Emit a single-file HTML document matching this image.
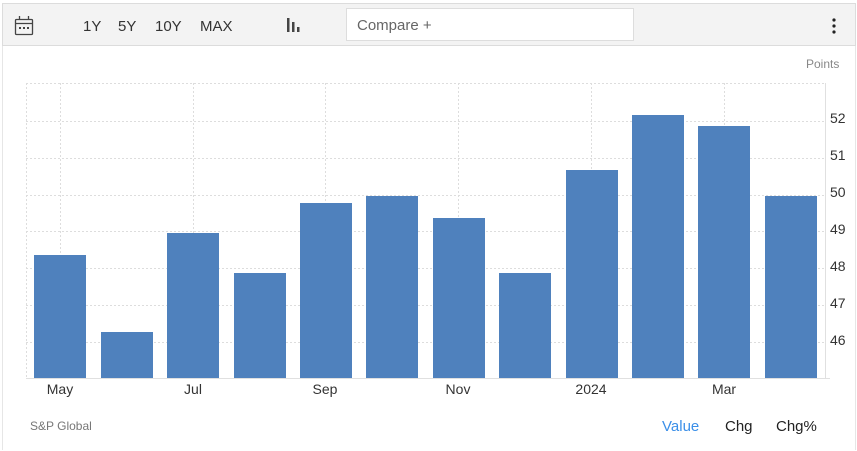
<!DOCTYPE html>
<html><head><meta charset="utf-8"><style>
html,body{margin:0;padding:0;background:#fff;width:857px;height:451px;overflow:hidden;font-family:"Liberation Sans",sans-serif}
.frame{position:absolute;left:2px;top:3px;width:852px;height:447px;border-left:1px solid #e6e6e6;border-right:1px solid #e6e6e6}
.bar{position:absolute;left:2px;top:3px;width:852px;height:41px;background:#f3f3f3;border:1px solid #dcdcdc}
.t{position:absolute;font-size:15px;color:#333}
.cmp{position:absolute;left:346px;top:8px;width:288px;height:33px;background:#fff;border:1px solid #ddd;box-sizing:border-box;font-size:15px;color:#666;padding:9px 10px;line-height:15px}
</style></head><body>
<div class="frame"></div>
<div class="bar"></div>
<svg style="position:absolute;left:0;top:0" width="857" height="451">
<g fill="none" stroke="#444" stroke-width="1.3">
<rect x="15.5" y="19.5" width="17" height="15" rx="1"/>
<line x1="15.5" y1="23.5" x2="32.5" y2="23.5"/>
<line x1="19.5" y1="16" x2="19.5" y2="20"/><line x1="28.5" y1="16" x2="28.5" y2="20"/>
</g>
<g fill="#444"><rect x="19" y="27" width="2" height="2"/><rect x="23" y="27" width="2" height="2"/><rect x="27" y="27" width="2" height="2"/></g>
<g fill="#444"><rect x="287" y="18" width="2.5" height="14"/><rect x="292" y="22" width="2.5" height="10"/><rect x="297" y="27" width="2.5" height="5"/></g>
<g fill="#222"><circle cx="834" cy="20" r="1.6"/><circle cx="834" cy="26" r="1.6"/><circle cx="834" cy="32" r="1.6"/></g>
<g stroke="#ddd" stroke-dasharray="2,2" stroke-width="1">
<line x1="26" y1="83.5" x2="825" y2="83.5"/>
<line x1="26" y1="121.5" x2="825" y2="121.5"/><line x1="26" y1="158.5" x2="825" y2="158.5"/>
<line x1="26" y1="195.5" x2="825" y2="195.5"/><line x1="26" y1="231.5" x2="825" y2="231.5"/>
<line x1="26" y1="268.5" x2="825" y2="268.5"/><line x1="26" y1="305.5" x2="825" y2="305.5"/>
<line x1="26" y1="342.5" x2="825" y2="342.5"/>
<line x1="26.5" y1="83" x2="26.5" y2="378"/>
<line x1="60.5" y1="83" x2="60.5" y2="378"/><line x1="193.5" y1="83" x2="193.5" y2="378"/>
<line x1="325.5" y1="83" x2="325.5" y2="378"/><line x1="458.5" y1="83" x2="458.5" y2="378"/>
<line x1="591.5" y1="83" x2="591.5" y2="378"/><line x1="724.5" y1="83" x2="724.5" y2="378"/>
</g>
<line x1="825.5" y1="83" x2="825.5" y2="379" stroke="#e0e0e0"/>
<line x1="26" y1="378.5" x2="830" y2="378.5" stroke="#e0e0e0"/>
<g fill="#4f81bd">
<rect x="34" y="255" width="52" height="123"/>
<rect x="101" y="332" width="52" height="46"/>
<rect x="167" y="233" width="52" height="145"/>
<rect x="234" y="273" width="52" height="105"/>
<rect x="300" y="203" width="52" height="175"/>
<rect x="366" y="196" width="52" height="182"/>
<rect x="433" y="218" width="52" height="160"/>
<rect x="499" y="273" width="52" height="105"/>
<rect x="566" y="170" width="52" height="208"/>
<rect x="632" y="115" width="52" height="263"/>
<rect x="698" y="126" width="52" height="252"/>
<rect x="765" y="196" width="52" height="182"/>
</g>
<g font-family="Liberation Sans" font-size="14" fill="#333">
<text x="830" y="123">52</text><text x="830" y="160">51</text><text x="830" y="197">50</text>
<text x="830" y="234">49</text><text x="830" y="271">48</text><text x="830" y="308">47</text><text x="830" y="345">46</text>
</g>
<text x="806" y="68" font-family="Liberation Sans" font-size="12" fill="#888">Points</text>
<g font-family="Liberation Sans" font-size="14" fill="#333" text-anchor="middle">
<text x="60" y="394">May</text><text x="193" y="394">Jul</text><text x="325" y="394">Sep</text>
<text x="458" y="394">Nov</text><text x="591" y="394">2024</text><text x="724" y="394">Mar</text>
</g>
<text x="30" y="430" font-family="Liberation Sans" font-size="12" fill="#777">S&amp;P Global</text>
<g font-family="Liberation Sans" font-size="15">
<text x="662" y="431" fill="#3b8fe8">Value</text>
<text x="725" y="431" fill="#222">Chg</text>
<text x="776" y="431" fill="#222">Chg%</text>
</g>
</svg>
<span class="t" style="left:83px;top:18px">1Y</span>
<span class="t" style="left:118px;top:18px">5Y</span>
<span class="t" style="left:155px;top:18px">10Y</span>
<span class="t" style="left:200px;top:18px">MAX</span>
<div class="cmp">Compare +</div>
</body></html>
